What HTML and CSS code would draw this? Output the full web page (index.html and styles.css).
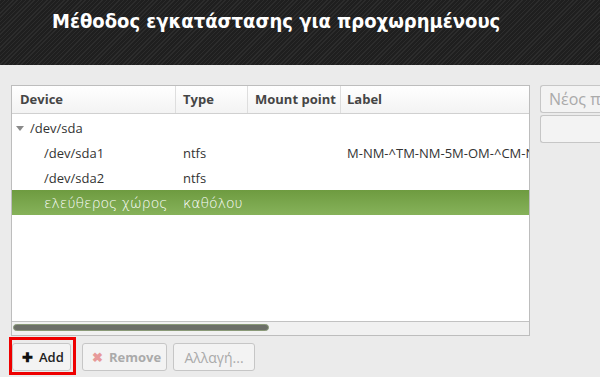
FILE: index.html
```html
<!DOCTYPE html>
<html>
<head>
    <title>Μέθοδος εγκατάστασης</title>
    <link rel="stylesheet" href="styles.css">
</head>
<body>
    <div class="header">
        <h1>Μέθοδος εγκατάστασης για προχωρημένους</h1>
    </div>
    <div class="main">
        <div class="left">
            <div class="tree">
                <div class="row head">
                    <div class="c dev">Device</div>
                    <div class="c typ">Type</div>
                    <div class="c mnt">Mount point</div>
                    <div class="c lbl">Label</div>
                </div>
                <div class="rows">
                    <div class="row">
                        <div class="c dev"><span class="arrow"></span>/dev/sda</div>
                    </div>
                    <div class="row">
                        <div class="c dev sub">/dev/sda1</div>
                        <div class="c typ">ntfs</div>
                        <div class="c mnt"></div>
                        <div class="c lbl">M-NM-^TM-NM-5M-OM-^CM-N</div>
                    </div>
                    <div class="row">
                        <div class="c dev sub">/dev/sda2</div>
                        <div class="c typ">ntfs</div>
                    </div>
                    <div class="row selected">
                        <div class="c dev sub">ελεύθερος χώρος</div>
                        <div class="c typ">καθόλου</div>
                    </div>
                </div>
                <div class="scrollbar"><div class="thumb"></div></div>
            </div>
            <div class="actions">
                <span class="highlight">
                    <button class="btn add"><span class="plus">✚</span>Add</button>
                </span>
                <button class="btn remove" disabled><span class="cross">✖</span>Remove</button>
                <button class="btn edit" disabled>Αλλαγή...</button>
            </div>
        </div>
        <div class="side">
            <button class="btn wide" disabled>Νέος πί</button>
            <button class="btn wide" disabled></button>
        </div>
    </div>
</body>
</html>
```

FILE: styles.css
```css
body {
    margin: 0;
    padding: 0;
    background: #ebebeb;
    font-family: "Open Sans", "Noto Sans", sans-serif;
    font-size: 13px;
    color: #333;
    overflow: hidden;
}

.header {
    height: 65px;
    background-color: #232323;
    background-image: repeating-linear-gradient(135deg, #2c2c2c 0, #2c2c2c 1px, #1f1f1f 1px, #1f1f1f 3px);
}

.header h1 {
    margin: 0;
    padding: 7px 0 0 52px;
    font-family: "DejaVu Sans Condensed", "DejaVu Sans", sans-serif;
    font-size: 20px;
    font-weight: bold;
    color: #fff;
    line-height: 28px;
    white-space: nowrap;
}

.main {
    display: flex;
    gap: 10px;
    padding: 20px 0 0 11px;
}

.left {
    width: 519px;
    flex: none;
}

.tree {
    height: 249px;
    border: 1px solid #bdbdbd;
    background: #fff;
    display: flex;
    flex-direction: column;
}

.row {
    display: flex;
    height: 25px;
    align-items: center;
    white-space: nowrap;
}

.row.head {
    height: 27px;
    background: linear-gradient(#fff, #f3f3f3);
    border-bottom: 1px solid #d0d0d0;
    font-weight: bold;
    color: #454545;
}

.head .c {
    height: 27px;
    line-height: 27px;
    border-right: 1px solid #dedede;
}

.head .lbl {
    border-right: none;
}

.c {
    flex: none;
    overflow: hidden;
    box-sizing: border-box;
}

.dev {
    width: 164px;
    padding-left: 8px;
}

.typ {
    width: 72px;
    padding-left: 7px;
}

.mnt {
    width: 93px;
    padding-left: 7px;
}

.lbl {
    width: 188px;
    padding-left: 6px;
}

.rows {
    flex: 1;
    padding-top: 1px;
}

.arrow {
    display: inline-block;
    width: 0;
    height: 0;
    border-left: 4px solid transparent;
    border-right: 4px solid transparent;
    border-top: 5px solid #8a8a8a;
    margin: 0 6px 2px -4px;
    vertical-align: middle;
}

.sub {
    padding-left: 32px;
}

.row.selected {
    background: linear-gradient(#6e9b40, #86b25a);
    color: #fff;
    font-family: "DejaVu Sans", sans-serif;
    font-weight: 200;
    font-size: 14px;
}

.scrollbar {
    height: 11px;
    border-top: 1px solid #c2c2c2;
    background: #f1f1f1;
    padding: 2px 0 0 1px;
    box-sizing: content-box;
}

.thumb {
    width: 254px;
    height: 5px;
    border-radius: 4px;
    background: #6c6f68;
    border: 1px solid #8a9a78;
}

.actions {
    display: flex;
    align-items: flex-start;
    gap: 6px;
    margin-top: 1px;
}

.highlight {
    display: inline-block;
    border: 3px solid #ee0000;
    padding: 3px 2px 1px 0;
    margin-left: -2px;
}

.btn {
    height: 28px;
    border: 1px solid #c6c6c6;
    border-radius: 3px;
    background: #f3f3f3;
    font-family: "Open Sans", "Noto Sans", sans-serif;
    font-size: 13px;
    padding: 0 9px;
    color: #aaa;
    white-space: nowrap;
}

.actions .remove, .actions .edit {
    margin-top: 6px;
}

.add {
    color: #222;
    width: 59px;
    font-weight: 600;
}

.plus {
    font-size: 13px;
    color: #111;
    margin-right: 6px;
}

.remove {
    width: 85px;
    font-weight: bold;
}

.cross {
    color: #e79a9a;
    margin-right: 6px;
}

.edit {
    width: 82px;
    font-size: 14px;
}

.side {
    display: flex;
    flex-direction: column;
    gap: 2px;
    overflow: hidden;
}

.wide {
    width: 60px;
    height: 28px;
    text-align: left;
    font-size: 16px;
    padding-left: 8px;
    border-right: none;
    border-radius: 3px 0 0 3px;
}
```
